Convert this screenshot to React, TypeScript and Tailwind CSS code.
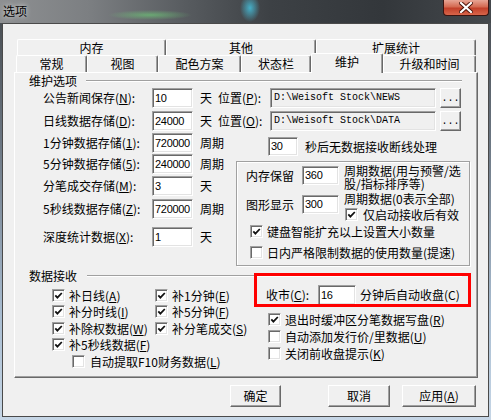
import React from 'react'

const sunken =
  'border border-t-[#a0a0a0] border-l-[#a0a0a0] border-r-white border-b-white shadow-[inset_1px_1px_0_#696969,inset_-1px_-1px_0_#e3e3e3]'
const raised =
  'border border-t-white border-l-white border-r-[#696969] border-b-[#696969] shadow-[inset_-1px_-1px_0_#a0a0a0]'

function Box({ value, className, path }: { value: string; className: string; path?: boolean }) {
  return (
    <div
      className={`${className} ${sunken} shrink-0 flex items-center pl-[2px] overflow-hidden whitespace-nowrap ${
        path
          ? "bg-[#f0f0f0] font-['Liberation_Mono',monospace] text-[10px] pl-[3px]"
          : "bg-white font-['Liberation_Sans',sans-serif] text-[11px] tracking-[-0.3px]"
      }`}
    >
      {value}
    </div>
  )
}

function Check({ on }: { on?: boolean }) {
  return (
    <span className={`w-[13px] h-[13px] shrink-0 bg-white ${sunken} flex items-center justify-center`}>
      {on && (
        <svg width="9" height="9" viewBox="0 0 9 9">
          <polyline points="1.3,4.3 3.4,6.6 7.8,2" fill="none" stroke="#111" strokeWidth="1.8" />
        </svg>
      )}
    </span>
  )
}

function Key({ t, k, tail = '' }: { t: string; k: string; tail?: string }) {
  return (
    <span className="whitespace-nowrap">
      {t}(<u>{k}</u>){tail}
    </span>
  )
}

function CheckRow({ on, children, gap = 'gap-[4px]' }: { on?: boolean; children: React.ReactNode; gap?: string }) {
  return (
    <div className={`flex items-center h-[13px] ${gap}`}>
      <Check on={on} />
      {children}
    </div>
  )
}

function Tab({ w, h, children, selected }: { w: string; h: string; children: React.ReactNode; selected?: boolean }) {
  return (
    <div
      className={`${w} ${h} shrink-0 flex items-center justify-center bg-[#f0f0f0] border-t border-l border-r border-t-white border-l-white border-r-[#696969] rounded-t-[2px] shadow-[inset_-1px_0_0_#a0a0a0] ${
        selected ? 'relative z-10 mb-[-1px] pb-[4px]' : ''
      }`}
    >
      {children}
    </div>
  )
}

function FieldRow({ label, value, unit, className }: { label: React.ReactNode; value: string; unit: string; className: string }) {
  return (
    <div className={`flex items-center h-[20px] pl-[28px] ${className}`}>
      <span className="w-[109px] shrink-0">{label}</span>
      <Box value={value} className="w-[41px] h-[20px]" />
      <span className="ml-[7px]">{unit}</span>
    </div>
  )
}

function Btn({ className, children }: { className: string; children: React.ReactNode }) {
  return (
    <div className={`${className} ${raised} h-[22px] bg-[#f0f0f0] flex items-center justify-center shrink-0`}>
      {children}
    </div>
  )
}

export default function App() {
  return (
    <div className="w-[491px] h-[420px] overflow-hidden flex flex-col bg-[linear-gradient(180deg,#44484c_0%,#6d7884_35%,#a9bdd1_75%,#c6d6e6_100%)] font-['Noto_Sans_CJK_SC',sans-serif] text-[12px] leading-none text-black">
      {/* title bar */}
      <div className="h-[23px] shrink-0 flex items-start justify-between bg-[radial-gradient(ellipse_42px_5px_at_150px_15px,rgba(110,210,120,0.6),transparent),radial-gradient(ellipse_10px_14px_at_250px_8px,rgba(70,200,230,0.8),transparent),linear-gradient(90deg,#8e9092_0%,#7c7f82_18%,#575b5f_38%,#3d4145_55%,#33373b_78%,#44484c_100%)]">
        <span className="pl-[3px] pt-[5px] text-[12px] [text-shadow:0_0_5px_rgba(255,255,255,0.9)]">选项</span>
        <div className="mr-[2px] w-[46px] h-[16px] rounded-b-[4px] border border-t-0 border-[#3b1410] bg-[linear-gradient(180deg,#e7a595_0%,#d46a52_45%,#c2402a_55%,#d8654a_100%)] flex items-center justify-center">
          <svg width="14" height="11" viewBox="0 0 14 11">
            <path d="M2 1 L12 10 M12 1 L2 10" stroke="#4a1208" strokeWidth="4" strokeLinecap="square" />
            <path d="M2 1 L12 10 M12 1 L2 10" stroke="#fff" strokeWidth="2.2" strokeLinecap="square" />
          </svg>
        </div>
      </div>

      <div className="flex h-[394px] shrink-0">
        <div className="w-[2px]" />
        {/* client */}
        <div className="w-[487px] h-[394px] border border-[#4a4a4a] bg-[#f0f0f0] pt-[15px] flex flex-col">
          {/* tab rows */}
          <div className="flex ml-[14px] h-[16px]">
            <Tab w="w-[149px]" h="h-[16px]">内存</Tab>
            <Tab w="w-[150px]" h="h-[16px]">其他</Tab>
            <Tab w="w-[160px]" h="h-[16px]">扩展统计</Tab>
          </div>
          <div className="flex items-end ml-[13px] h-[19px] mt-[-2px]">
            <Tab w="w-[71px]" h="h-[17px]">常规</Tab>
            <Tab w="w-[71px]" h="h-[17px]">视图</Tab>
            <Tab w="w-[83px]" h="h-[17px]">配色方案</Tab>
            <Tab w="w-[70px]" h="h-[17px]">状态栏</Tab>
            <Tab w="w-[72px]" h="h-[20px]" selected>维护</Tab>
            <Tab w="w-[93px]" h="h-[17px]">升级和时间</Tab>
          </div>

          {/* panel */}
          <div className="relative ml-[11px] w-[464px] h-[306px] shrink-0 border border-t-white border-l-white border-r-[#696969] border-b-[#696969] shadow-[inset_-1px_-1px_0_#a0a0a0] flex flex-col">
            <div className="flex items-center h-[15px]">
              <span className="pl-[14px]">维护选项</span>
              <div className="ml-[9px] w-[376px] border-t border-b border-t-[#a0a0a0] border-b-white" />
            </div>

            {[
              { l: <Key t="公告新闻保存" k="N" tail=":" />, v: '10', p: 'P', path: 'D:\\Weisoft Stock\\NEWS', mt: '' },
              { l: <Key t="日线数据存储" k="D" tail=":" />, v: '24000', p: 'O', path: 'D:\\Weisoft Stock\\DATA', mt: 'mt-[3px]' },
            ].map((r, i) => (
              <div key={i} className={`flex items-center h-[20px] pl-[28px] ${r.mt}`}>
                <span className="w-[109px] shrink-0">{r.l}</span>
                <Box value={r.v} className="w-[41px] h-[20px]" />
                <span className="ml-[7px] w-[12px]">天</span>
                <span className="ml-[6px] w-[52px]">
                  <Key t="位置" k={r.p} tail=":" />
                </span>
                <Box value={r.path} className="w-[166px] h-[20px]" path />
                <div className={`ml-[4px] w-[21px] h-[20px] ${raised} flex items-end justify-center pb-[3px] font-['Liberation_Mono',monospace] text-[10px]`}>
                  ...
                </div>
              </div>
            ))}

            <div className="flex items-start">
              <div className="w-[221px] shrink-0 flex flex-col">
                <FieldRow className="mt-[2px]" label={<Key t="1分钟数据存储" k="1" tail=":" />} value="720000" unit="周期" />
                <FieldRow className="mt-[1px]" label={<Key t="5分钟数据存储" k="5" tail=":" />} value="240000" unit="周期" />
                <FieldRow className="mt-[2px]" label={<Key t="分笔成交存储" k="M" tail=":" />} value="3" unit="天" />
                <FieldRow className="mt-[3px]" label={<Key t="5秒线数据存储" k="Z" tail=":" />} value="720000" unit="周期" />
                <FieldRow className="mt-[8px]" label={<Key t="深度统计数据" k="X" tail=":" />} value="1" unit="天" />
              </div>
              <div className="flex flex-col">
                <div className="mt-[6px] flex items-center h-[19px] pl-[32px]">
                  <Box value="30" className="w-[30px] h-[19px]" />
                  <span className="ml-[7px]">秒后无数据接收断线处理</span>
                </div>
                <div className="mt-[5px] w-[234px] h-[105px] border border-[#a0a0a0] shadow-[inset_1px_1px_0_#fff,1px_1px_0_#fff] flex flex-col">
                  <div className="mt-[4px] flex items-start pl-[9px] h-[19px]">
                    <span className="w-[56px] h-[19px] flex items-center shrink-0">内存保留</span>
                    <Box value="360" className="w-[37px] h-[19px]" />
                    <div className="ml-[5px] mt-[-2px] flex flex-col">
                      <span className="h-[13px] flex items-center whitespace-nowrap">周期数据(用与预警/选</span>
                      <span className="h-[13px] flex items-center whitespace-nowrap">股/指标排序等)</span>
                    </div>
                  </div>
                  <div className="mt-[8px] flex items-start pl-[9px]">
                    <span className="mt-[2px] w-[56px] h-[19px] flex items-center shrink-0">图形显示</span>
                    <Box value="300" className="mt-[2px] w-[37px] h-[19px]" />
                    <div className="ml-[5px] flex flex-col">
                      <span className="h-[12px] flex items-center">周期数据(0表示全部)</span>
                      <div className="mt-[3px] ml-[1px]">
                        <CheckRow on gap="gap-[5px]">仅启动接收后有效</CheckRow>
                      </div>
                    </div>
                  </div>
                  <div className="mt-[4px] pl-[13px]">
                    <CheckRow on>键盘智能扩充以上设置大小数量</CheckRow>
                  </div>
                  <div className="mt-[8px] pl-[13px]">
                    <CheckRow>日内严格限制数据的使用数量(提速)</CheckRow>
                  </div>
                </div>
              </div>
            </div>

            <div className="mt-[3px] flex items-center h-[14px]">
              <span className="pl-[14px]">数据接收</span>
              <div className="ml-[10px] w-[375px] border-t border-b border-t-[#a0a0a0] border-b-white" />
            </div>

            <div className="flex items-start">
              <div className="w-[239px] shrink-0 flex flex-col pl-[37px]">
                {[
                  ['补日线', 'A', '补1分钟', 'E', 'mt-[6px]'],
                  ['补分时线', 'I', '补5分钟', 'F', 'mt-[3px]'],
                  ['补除权数据', 'W', '补分笔成交', 'S', 'mt-[4px]'],
                ].map(([a, ak, b, bk, mt]) => (
                  <div key={a} className={`flex ${mt}`}>
                    <div className="w-[103px] shrink-0">
                      <CheckRow on>
                        <Key t={a} k={ak} />
                      </CheckRow>
                    </div>
                    <CheckRow on>
                      <Key t={b} k={bk} />
                    </CheckRow>
                  </div>
                ))}
                <div className="mt-[3px]">
                  <CheckRow on>
                    <Key t="补5秒线数据" k="F" />
                  </CheckRow>
                </div>
                <div className="mt-[4px] pl-[20px]">
                  <CheckRow gap="gap-[5px]">
                    <Key t="自动提取F10财务数据" k="L" />
                  </CheckRow>
                </div>
              </div>
              <div className="flex flex-col">
                <div className="mt-[2px] flex items-center h-[20px] pl-[12px]">
                  <span className="w-[52px] shrink-0">
                    <Key t="收市" k="C" tail=":" />
                  </span>
                  <Box value="16" className="w-[38px] h-[20px]" />
                  <span className="ml-[4px]">分钟后自动收盘(C)</span>
                </div>
                <div className="mt-[8px] pl-[14px]">
                  <CheckRow on>
                    <Key t="退出时缓冲区分笔数据写盘" k="R" />
                  </CheckRow>
                </div>
                <div className="mt-[4px] pl-[14px]">
                  <CheckRow>
                    <Key t="自动添加发行价/里数据" k="U" />
                  </CheckRow>
                </div>
                <div className="mt-[4px] pl-[14px]">
                  <CheckRow>
                    <Key t="关闭前收盘提示" k="K" />
                  </CheckRow>
                </div>
              </div>
            </div>

            {/* red annotation box */}
            <div className="absolute left-[239px] top-[200px] w-[217px] h-[34px] border-[3px] border-[#ff0000]" />
          </div>

          {/* buttons */}
          <div className="mt-[7px] flex">
            <Btn className="ml-[227px] w-[51px]">确定</Btn>
            <Btn className="ml-[47px] w-[62px]">取消</Btn>
            <Btn className="ml-[12px] w-[74px]">
              <Key t="应用" k="A" />
            </Btn>
          </div>
        </div>
        <div className="w-[2px]" />
      </div>
    </div>
  )
}
